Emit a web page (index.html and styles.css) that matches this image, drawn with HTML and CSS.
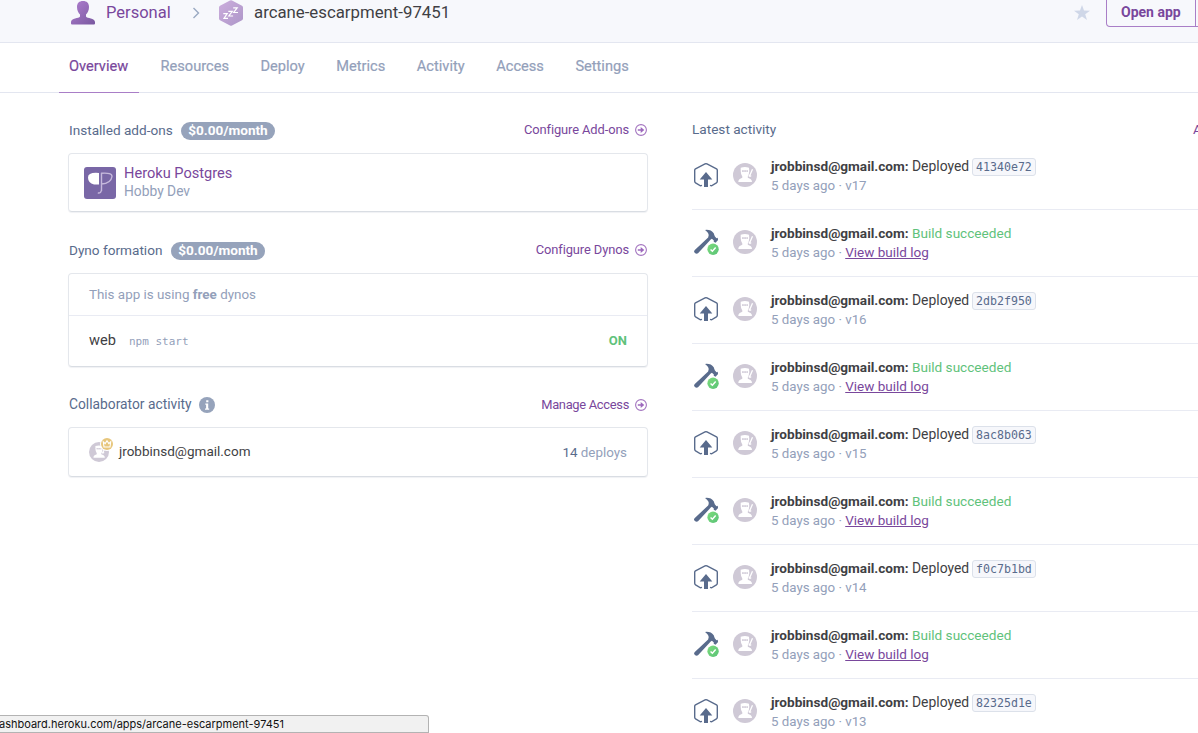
FILE: index.html
```html
<!DOCTYPE html>
<html lang="en">
<head>
<meta charset="utf-8">
<title>arcane-escarpment-97451</title>
<link rel="stylesheet" href="styles.css">
</head>
<body>
<svg class="defs" width="0" height="0" aria-hidden="true">
  <defs>
    <linearGradient id="purple" x1="0" y1="0" x2="1" y2="1"><stop offset="0" stop-color="#b07fd0"/><stop offset="1" stop-color="#79589f"/></linearGradient>
    <linearGradient id="lilac" x1="0" y1="0" x2="1" y2="1"><stop offset="0" stop-color="#ccaedd"/><stop offset="1" stop-color="#ad96c8"/></linearGradient>
    <linearGradient id="green" x1="0" y1="0" x2="1" y2="1"><stop offset="0" stop-color="#7ddc7c"/><stop offset="1" stop-color="#59c276"/></linearGradient>
  </defs>
  <symbol id="deploy" viewBox="0 0 24 24">
    <path d="M8 22.300 6.400 22.800 1.600 19.800Q.7 19.200.7 18.300V7.200Q.7 6.400 1.500 5.900L11 .9Q12 .5 13 .9L22.500 5.900Q23.300 6.400 23.300 7.200V18.300Q23.300 19.200 22.400 19.800L17.600 22.800 16 22.300" fill="none" stroke="#596b8c" stroke-width="1.400"/>
    <path d="M12 9 18.300 16.500H14V24H10V16.500H5.700Z" fill="#596b8c"/>
  </symbol>
  <symbol id="build" viewBox="0 0 28 28">
    <path d="M12.500 1Q18.500 .3 21.500 4.500L22.600 7.500 24.300 9.500 25.600 9.200 26 11.500 23.400 14.300 21.500 13.300 21.600 11.800 19.600 10.200 18.400 11 5.200 25.200Q3.600 26.300 2 25Q.3 23.500 1.600 22L15.700 8.800Q17 6 15.600 4.200Q14.400 2.700 12.500 1Z" fill="#596b8c"/>
    <circle cx="20.800" cy="21" r="6.200" fill="#fff"/><circle cx="20.800" cy="21" r="5.900" fill="url(#green)"/>
    <path d="m18.200 21.200 1.900 1.800 3.400-3.800" fill="none" stroke="#fff" stroke-width="1.500"/>
  </symbol>
  <symbol id="ninja" viewBox="0 0 24 24">
    <circle cx="12" cy="12" r="12" fill="#cfc9d6"/>
    <path d="M7.700 4.700Q12 3.500 16 4.700L16.300 8Q16 12 14.800 13.500V14.800L17.500 16Q19 17 19 19H5.300Q5.300 17 6.700 16L9.300 14.800V13.500Q7.700 11 7.700 8Z" fill="#fff"/>
    <path d="M9 7.300h6v1.500H9z" fill="#cfc9d6"/><path d="M10.500 8h1m1.500 0h1" stroke="#fff" stroke-width=".6"/>
    <path d="m19.500 6.300-3.300 7.400M15.700 12l2.500 1.300" fill="none" stroke="#fff" stroke-width="1.300"/>
  </symbol>
  <symbol id="go" viewBox="0 0 12 12">
    <circle cx="6" cy="6" r="5.400" fill="none" stroke="#a374bf" stroke-width="1.100"/><path d="M2.800 5.200H5.700V3L9.300 6 5.700 9V6.800H2.800Z" fill="#9d68bd"/>
  </symbol>
</svg>

<header class="topbar">
  <svg class="person" viewBox="0 0 24 25"><path d="M12 1C15.800 1 18 3 18 7 18 10.500 16.500 13 15 14.500V16.500C16 18.500 24 18 24 22V23.500Q24 24.500 23 24.500H1Q0 24.500 0 23.500V22C0 18 8 18.500 9 16.500V14.500C7.500 13 6 10.500 6 7 6 3 8.200 1 12 1Z" fill="url(#purple)"/></svg>
  <a class="team">Personal</a>
  <svg class="chevron" viewBox="0 0 8 12"><path d="m1.500 1 5 5-5 5" fill="none" stroke="#9aa9c2" stroke-width="1.400"/></svg>
  <svg class="hex" viewBox="0 0 24 26"><path d="M11 .4Q12 0 13 .4L23 5.700Q24 6.200 24 7.500V18.500Q24 19.800 23 20.300L13 25.600Q12 26 11 25.600L1 20.300Q0 19.800 0 18.500V7.500Q0 6.200 1 5.700Z" fill="url(#lilac)"/><path d="M4.300 13.700H8.200L5 18.300H9M9.300 11.300h4L9.800 16h4.300M14.200 7.800h4L14.700 12.500H19" fill="none" stroke="#fff" stroke-width="1.200"/></svg>
  <span class="app-name">arcane-escarpment-97451</span>
  <svg class="star" viewBox="0 0 16 15"><path d="M8 0 10 5.500 16 5.700 11.200 9.200 13 15 8 11.600 3 15 4.800 9.200 0 5.700 6 5.500Z" fill="#cfd7e8"/></svg>
  <div class="actions"><a class="open">Open app</a><a class="more"></a></div>
</header>

<nav class="tabs">
  <a class="tab active">Overview</a><a class="tab">Resources</a><a class="tab">Deploy</a><a class="tab">Metrics</a><a class="tab">Activity</a><a class="tab">Access</a><a class="tab">Settings</a>
</nav>

<main class="content">
  <div class="left">
    <section>
      <div class="head"><span class="label addons">Installed add-ons</span><span class="pill">$0.00/month</span><a class="config">Configure Add-ons</a><svg class="go"><use href="#go"/></svg></div>
      <div class="card addon">
        <svg class="pg" viewBox="0 0 32 32"><rect width="32" height="32" rx="3" fill="#7967a6"/><path d="M15 6Q4 5 4 10.500 4 16 10 17.500H15Z" fill="#fff"/><path d="M17.500 24V6.300Q28 5.500 28 9.500 27 16.500 17.500 17M17.500 22Q17.500 26.500 13.800 26" fill="none" stroke="#c6b9dc" stroke-width="1.400"/></svg>
        <div><a class="addon-name">Heroku Postgres</a><div class="plan">Hobby Dev</div></div>
      </div>
    </section>
    <section>
      <div class="head"><span class="label dyno">Dyno formation</span><span class="pill">$0.00/month</span><a class="config">Configure Dynos</a><svg class="go"><use href="#go"/></svg></div>
      <div class="card">
        <div class="note">This app is using <b>free</b> dynos</div>
        <div class="process"><span class="web">web</span><code class="cmd">npm start</code><span class="on">ON</span></div>
      </div>
    </section>
    <section>
      <div class="head"><span class="label collab">Collaborator activity</span><svg class="info" viewBox="0 0 16 16"><circle cx="8" cy="8" r="8" fill="#96a3bb"/><path d="M7.200 3.200H9.400V5.200H7.200ZM6.300 6.500H9.200V11.500H10.200V12.700H6V11.500H7.100V7.700H6.300Z" fill="#fff"/></svg><a class="config access">Manage Access</a><svg class="go go-access"><use href="#go"/></svg></div>
      <div class="card person-row">
        <svg class="owner" viewBox="0 0 24 24"><svg y="4" width="20" height="20"><use href="#ninja"/></svg><circle cx="18" cy="6" r="7" fill="#fff"/><circle cx="18" cy="6" r="6" fill="#e7c67c"/><path d="M14.300 3.800 16.200 5.600 18 2.700 19.800 5.600 21.700 3.800 21 9H15Z" fill="none" stroke="#fff" stroke-width="1.100"/></svg>
        <span class="email">jrobbinsd@gmail.com</span><span class="deploys"><span class="count">14</span> deploys</span>
      </div>
    </section>
  </div>

  <div class="right">
    <div class="right-head"><span class="label latest">Latest activity</span><a class="all">All Activity</a></div>
    <ul class="feed">
      <li class="item"><svg class="event"><use href="#deploy"/></svg><svg class="avatar"><use href="#ninja"/></svg><div><div class="line"><b class="who">jrobbinsd@gmail.com:</b><span class="deployed">Deployed</span><code class="sha">41340e72</code></div><div class="meta">5 days ago · v17</div></div></li>
      <li class="item"><svg class="event build"><use href="#build"/></svg><svg class="avatar"><use href="#ninja"/></svg><div><div class="line"><b class="who">jrobbinsd@gmail.com:</b><span class="ok">Build succeeded</span></div><div class="meta">5 days ago · <a class="log">View build log</a></div></div></li>
      <li class="item"><svg class="event"><use href="#deploy"/></svg><svg class="avatar"><use href="#ninja"/></svg><div><div class="line"><b class="who">jrobbinsd@gmail.com:</b><span class="deployed">Deployed</span><code class="sha">2db2f950</code></div><div class="meta">5 days ago · v16</div></div></li>
      <li class="item"><svg class="event build"><use href="#build"/></svg><svg class="avatar"><use href="#ninja"/></svg><div><div class="line"><b class="who">jrobbinsd@gmail.com:</b><span class="ok">Build succeeded</span></div><div class="meta">5 days ago · <a class="log">View build log</a></div></div></li>
      <li class="item"><svg class="event"><use href="#deploy"/></svg><svg class="avatar"><use href="#ninja"/></svg><div><div class="line"><b class="who">jrobbinsd@gmail.com:</b><span class="deployed">Deployed</span><code class="sha">8ac8b063</code></div><div class="meta">5 days ago · v15</div></div></li>
      <li class="item"><svg class="event build"><use href="#build"/></svg><svg class="avatar"><use href="#ninja"/></svg><div><div class="line"><b class="who">jrobbinsd@gmail.com:</b><span class="ok">Build succeeded</span></div><div class="meta">5 days ago · <a class="log">View build log</a></div></div></li>
      <li class="item"><svg class="event"><use href="#deploy"/></svg><svg class="avatar"><use href="#ninja"/></svg><div><div class="line"><b class="who">jrobbinsd@gmail.com:</b><span class="deployed">Deployed</span><code class="sha">f0c7b1bd</code></div><div class="meta">5 days ago · v14</div></div></li>
      <li class="item"><svg class="event build"><use href="#build"/></svg><svg class="avatar"><use href="#ninja"/></svg><div><div class="line"><b class="who">jrobbinsd@gmail.com:</b><span class="ok">Build succeeded</span></div><div class="meta">5 days ago · <a class="log">View build log</a></div></div></li>
      <li class="item"><svg class="event"><use href="#deploy"/></svg><svg class="avatar"><use href="#ninja"/></svg><div><div class="line"><b class="who">jrobbinsd@gmail.com:</b><span class="deployed">Deployed</span><code class="sha">82325d1e</code></div><div class="meta">5 days ago · v13</div></div></li>
    </ul>
  </div>
</main>
<div class="status"><span class="url">ashboard.heroku.com/apps/arcane-escarpment-97451</span></div>
</body>
</html>
```
FILE: styles.css
```css
* { box-sizing: border-box; }
body { margin: 0; width: 1198px; height: 733px; overflow: hidden; background: #fff; color: #3f3f44; font: 13.6px/19px Roboto, "Liberation Sans", sans-serif; white-space: nowrap; }
a { color: #79479c; }
svg { display: block; flex: none; }
.defs { position: absolute; }

.topbar { display: flex; align-items: flex-start; height: 43px; padding-left: 71px; background: #f7f8fc; border-bottom: 1px solid #e3e6f0; font-size: 16.5px; line-height: 25px; }
.person { width: 24px; height: 25px; }
.team { width: 64px; margin-left: 11px; }
.chevron { width: 8px; height: 12px; margin: 7px 0 0 22px; }
.hex { width: 24px; height: 26px; margin-left: 19px; }
.app-name { margin-left: 11px; font-size: 16.8px; }
.star { width: 16px; height: 15px; margin: 5px 16px 0 auto; }
.actions { display: flex; width: 92px; height: 27px; overflow: hidden; font-size: 14px; font-weight: 700; }
.open { flex: none; width: 90px; padding-left: 14px; border: 1px solid #a97ec7; border-top: 0; border-radius: 0 0 0 4px; }
.more { flex: none; width: 20px; border-bottom: 1px solid #a97ec7; }

.tabs { display: flex; gap: 11.6px; height: 50px; padding-left: 59px; border-bottom: 1px solid #e3e6f0; }
.tab { height: 50px; padding: 0 10px; line-height: 46px; color: #93a0ba; font-size: 14.6px; -webkit-text-stroke: .2px; }
.active { width: 80px; color: #79479c; border-bottom: 1px solid #a97ec7; }

.content { display: flex; padding-left: 68px; }
.left { flex: none; width: 580px; }
.left section { height: 120px; padding-top: 27px; }
.left section:nth-child(2) { height: 154px; }
.head { display: flex; align-items: center; height: 21px; margin-bottom: 12px; padding: 0 1px; }
.label { color: #596b8c; }
.addons { width: 104px; }
.dyno { width: 94px; }
.collab { width: 123px; font-size: 13.8px; }
.pill { width: 94px; height: 18px; margin-left: 8px; border-radius: 9px; background: #96a3bb; color: #fff; font-weight: 700; line-height: 17px; text-align: center; }
.config { margin: 0 0 2px auto; font-size: 12.9px; letter-spacing: -.1px; }
.access { margin-bottom: 0; letter-spacing: -.3px; }
.go { width: 12px; height: 12px; margin: 0 0 2px 6px; }
.go-access { margin-bottom: 0; }
.info { width: 16px; height: 16px; margin-left: 7px; }
.card { border: 1px solid #e4e7ec; border-bottom-color: #d9dde3; border-radius: 4px; box-shadow: 0 1px 1px #f0f1f4; }
.addon { display: flex; gap: 8px; height: 59px; padding: 12px 15px 0; }
.pg { width: 32px; height: 32px; margin-top: 1px; }
.addon-name { display: block; font-size: 14.6px; line-height: 15px; }
.plan { margin-top: 1px; font-size: 13.8px; color: #93a0ba; }
.note { height: 42px; padding: 0 20px; border-bottom: 1px solid #e9ebf3; line-height: 41px; font-size: 13.4px; color: #93a0ba; }
.process { display: flex; height: 50px; padding: 0 20px; line-height: 49px; }
.web { font-size: 14.6px; }
.cmd { margin-left: 13px; font: 11px/51px "DejaVu Sans Mono", monospace; color: #93a0ba; }
.on { margin-left: auto; font-size: 13px; font-weight: 700; color: #5fc27b; }
.person-row { display: flex; height: 50px; padding: 0 20px; line-height: 47px; }
.owner { width: 24px; height: 24px; margin-top: 10px; }
.email { margin-left: 6px; font-size: 13.5px; }
.deploys { margin-left: auto; line-height: 49px; font-size: 13.4px; color: #93a0ba; }
.count { color: #596b8c; }

.right { flex: none; width: 580px; margin-left: 44px; padding-top: 27px; }
.right-head { display: flex; height: 19px; }
.all { margin-left: auto; width: 79px; }
.feed { margin: 0; padding: 0; list-style: none; }
.item { display: flex; height: 67px; padding-top: 14px; border-bottom: 1px solid #e9ebf3; }
.item:first-child { height: 71px; padding-top: 18px; }
.event { width: 24px; height: 24px; margin: 6px 1px 0 2px; }
.build { width: 27px; height: 27px; margin: 5px -1px 0 1px; }
.avatar { width: 24px; height: 24px; margin: 6px 14px 0; }
.line { display: flex; }
.deployed, .ok { margin-left: 3px; }
.deployed { width: 57px; font-size: 13.9px; }
.who { width: 138px; font-weight: 700; }
.ok { color: #5fc27b; }
.sha { height: 18px; margin: 1px 0 0 3px; padding: 0 3px; border: 1px solid #dce1ea; border-radius: 3px; background: #f6f7fb; color: #596b8c; font: 11.6px/16px "DejaVu Sans Mono", monospace; }
.meta { font-size: 13.3px; color: #93a0ba; }
.log { font-size: 13.5px; text-decoration: underline; }

.status { position: absolute; left: 0; top: 715px; width: 429px; height: 18px; border: 1px solid #b3b3b3; border-left: 0; border-radius: 0 3px 0 0; background: #f1f1f1; color: #111; font: 11px/16px Inter, sans-serif; text-indent: -1px; }
```
